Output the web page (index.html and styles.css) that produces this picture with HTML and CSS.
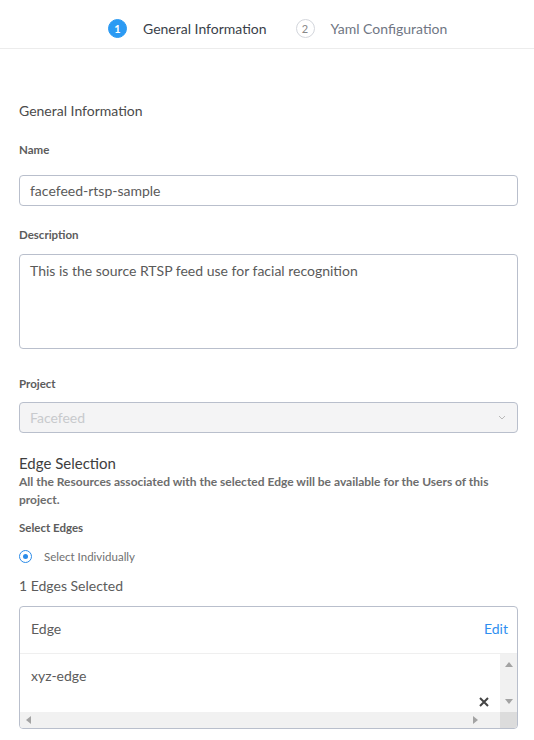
FILE: index.html
```html
<!DOCTYPE html>
<html>
<head>
<meta charset="utf-8">
<link rel="stylesheet" href="styles.css">
</head>
<body>
<header class="stepper">
  <div class="step active"><span class="num">1</span><span class="step-label">General Information</span></div>
  <div class="step"><span class="num">2</span><span class="step-label">Yaml Configuration</span></div>
</header>
<main class="form">
  <h2 class="section-title">General Information</h2>
  <label class="field-label name-label">Name</label>
  <div class="input">facefeed-rtsp-sample</div>
  <label class="field-label desc-label">Description</label>
  <div class="input textarea">This is the source RTSP feed use for facial recognition</div>
  <label class="field-label project-label">Project</label>
  <div class="input select">
    <span>Facefeed</span>
    <svg width="8" height="5" viewBox="0 0 8 5"><path d="M1 1 L4 4 L7 1" fill="none" stroke="#b9b9b9" stroke-width="1"/></svg>
  </div>
  <h3 class="edge-title">Edge Selection</h3>
  <p class="edge-desc">All the Resources associated with the selected Edge will be available for the Users of this project.</p>
  <label class="field-label sel">Select Edges</label>
  <div class="radio-row"><span class="radio"></span><span class="radio-label">Select Individually</span></div>
  <div class="count">1 Edges Selected</div>
  <div class="table">
    <div class="thead"><span>Edge</span><span class="edit">Edit</span></div>
    <div class="tbody">
      <div class="content">
        <div class="row-text">xyz-edge</div>
        <svg class="close" width="10" height="10" viewBox="0 0 10 10"><path d="M1 1 L9 9 M9 1 L1 9" stroke="#444" stroke-width="2"/></svg>
      </div>
      <div class="vscroll">
        <svg width="8" height="5" viewBox="0 0 8 5"><path d="M0 5 L4 0 L8 5 Z" fill="#a3a3a3"/></svg>
        <svg width="8" height="5" viewBox="0 0 8 5"><path d="M0 0 L4 5 L8 0 Z" fill="#a3a3a3"/></svg>
      </div>
      <div class="hscroll">
        <svg width="5" height="8" viewBox="0 0 5 8"><path d="M5 0 L0 4 L5 8 Z" fill="#a3a3a3"/></svg>
        <svg width="5" height="8" viewBox="0 0 5 8"><path d="M0 0 L5 4 L0 8 Z" fill="#a3a3a3"/></svg>
      </div>
      <div class="corner"></div>
    </div>
  </div>
</main>
</body>
</html>
```

FILE: styles.css
```css
* { box-sizing: border-box; margin: 0; padding: 0; }
body {
  font-family: Lato, "Open Sans", sans-serif;
  background: #fff;
  color: #555;
  width: 534px;
}
.stepper {
  height: 49px;
  border-bottom: 1px solid #ececec;
  display: flex;
  align-items: center;
  padding-left: 108px;
  padding-top: 8px;
  gap: 29px;
}
.step { display: flex; align-items: center; gap: 16px; }
.num {
  width: 19px; height: 19px; border-radius: 50%;
  border: 1px solid #d3d6dc;
  display: flex; align-items: center; justify-content: center;
  font-size: 11px; color: #888;
}
.step.active .num { background: #2b9af3; border-color: #2b9af3; color: #fff; font-weight: 700; }
.step-label { font-size: 14px; color: #707683; }
.step.active .step-label { color: #3a3f4a; }
.form { padding: 0 16px 0 19px; }
.section-title { font-size: 14px; font-weight: 400; color: #4b4b4b; margin-top: 53px; line-height: 18px; }
.field-label { display: block; font-size: 11.5px; font-weight: 700; color: #5c5c5c; line-height: 14px; }
.name-label { margin-top: 23px; margin-bottom: 18px; }
.desc-label { margin-top: 22px; margin-bottom: 12px; }
.project-label { margin-top: 28px; margin-bottom: 11px; }
.input {
  height: 31px; border: 1px solid #b9bfcc; border-radius: 4px;
  padding: 0 10px; display: flex; align-items: center;
  font-size: 14px; color: #5a5a5a;
}
.textarea { height: 95px; align-items: flex-start; padding-top: 7px; }
.select { background: #f4f4f5; color: #c8cacd; justify-content: space-between; padding-right: 11px; }
.edge-title { font-size: 15px; font-weight: 400; color: #3e3e3e; margin-top: 21px; line-height: 18px; }
.edge-desc { font-size: 12px; font-weight: 700; color: #6d6d6d; line-height: 18px; margin-top: 1px; }
.field-label.sel { margin-top: 12px; }
.radio-row { display: flex; align-items: center; gap: 12px; margin-top: 13px; height: 16px; }
.radio {
  width: 13px; height: 13px; border-radius: 50%; border: 1.5px solid #2b8be8;
  display: flex; align-items: center; justify-content: center;
}
.radio::after { content: ""; width: 5px; height: 5px; border-radius: 50%; background: #2b8be8; }
.radio-label { font-size: 11.5px; color: #707070; }
.count { font-size: 14px; color: #5c5c5c; margin-top: 14px; line-height: 16px; }
.table { margin-top: 12px; border: 1px solid #b9bfcc; border-radius: 4px; overflow: hidden; }
.thead {
  height: 47px; display: flex; align-items: center; justify-content: space-between;
  padding: 0 9px 3px 11px; border-bottom: 1px solid #efefef; font-size: 14px; color: #5c5c5c;
}
.edit { color: #2f8ff0; }
.tbody {
  display: grid; grid-template-columns: 1fr 17px; grid-template-rows: 58px 16px;
}
.content { position: relative; padding: 13px 11px 0; font-size: 14px; color: #5c5c5c; }
.close { position: absolute; right: 11px; bottom: 5px; }
.vscroll { background: #f1f1f1; display: flex; flex-direction: column; justify-content: space-between; align-items: center; padding: 8px 0 8px; }
.hscroll { background: #f1f1f1; display: flex; justify-content: space-between; align-items: center; padding: 0 22px 0 6px; }
.corner { background: #dcdcdc; }
```
